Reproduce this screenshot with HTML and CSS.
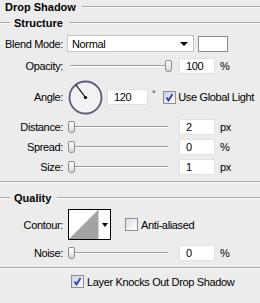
FILE: index.html
```html
<!DOCTYPE html>
<html lang="en">
<head>
	<meta charset="UTF-8">
	<title>Drop Shadow</title>
	<link rel="stylesheet" href="styles.css">
</head>
<body>
	<div class="panel">
		<div class="title">
			<span class="title-text">Drop Shadow</span>
			<span class="rule"></span>
		</div>
		<div class="group-head">
			<span class="rule lead"></span>
			<span class="group-text">Structure</span>
			<span class="rule"></span>
		</div>

		<div class="row blend-row">
			<span class="label">Blend Mode:</span>
			<div class="select">
				<span>Normal</span>
				<span class="arrow"></span>
			</div>
			<span class="swatch"></span>
		</div>

		<div class="row opacity-row">
			<span class="label">Opacity:</span>
			<div class="slider">
				<span class="track"></span>
				<span class="thumb"></span>
			</div>
			<span class="field">100</span>
			<span class="unit">%</span>
		</div>

		<div class="row angle-row">
			<span class="label">Angle:</span>
			<div class="dial">
				<svg width="35" height="35" viewBox="0 0 35 35">
					<circle cx="17.5" cy="17.5" r="16" fill="#f2f2f4" stroke="#5c5c78" stroke-width="1.8"/>
					<line x1="17.5" y1="17.5" x2="8" y2="5" stroke="#000" stroke-width="1.2"/>
					<circle cx="17.5" cy="17.5" r="1.6" fill="#000"/>
				</svg>
			</div>
			<span class="field angle-field">120</span>
			<span class="degree">°</span>
			<span class="check checked">
				<svg width="9" height="9" viewBox="0 0 9 9"><path d="M1.5 4.5 L3.5 7.5 L7.5 1" fill="none" stroke="#2f3fa3" stroke-width="1.8"/></svg>
			</span>
			<span class="check-label">Use Global Light</span>
		</div>

		<div class="row slider-row">
			<span class="label">Distance:</span>
			<div class="slider low">
				<span class="thumb"></span>
				<span class="track"></span>
			</div>
			<span class="field">2</span>
			<span class="unit">px</span>
		</div>
		<div class="row slider-row">
			<span class="label">Spread:</span>
			<div class="slider low">
				<span class="thumb"></span>
				<span class="track"></span>
			</div>
			<span class="field">0</span>
			<span class="unit">%</span>
		</div>
		<div class="row slider-row">
			<span class="label">Size:</span>
			<div class="slider low">
				<span class="thumb"></span>
				<span class="track"></span>
			</div>
			<span class="field">1</span>
			<span class="unit">px</span>
		</div>

		<div class="separator"></div>

		<div class="group-head quality-head">
			<span class="rule lead"></span>
			<span class="group-text">Quality</span>
			<span class="rule"></span>
		</div>

		<div class="row contour-row">
			<span class="label">Contour:</span>
			<div class="contour">
				<svg width="29" height="29" viewBox="0 0 29 29">
					<rect width="29" height="29" fill="#fff"/>
					<polygon points="0,29 29,0 29,29" fill="#a3a3a3"/>
				</svg>
				<span class="contour-arrow"><span class="arrow"></span></span>
			</div>
			<span class="check"></span>
			<span class="check-label">Anti-aliased</span>
		</div>

		<div class="row slider-row noise-row">
			<span class="label">Noise:</span>
			<div class="slider low">
				<span class="thumb"></span>
				<span class="track"></span>
			</div>
			<span class="field">0</span>
			<span class="unit">%</span>
		</div>

		<div class="separator"></div>

		<div class="knock-row">
			<span class="check checked">
				<svg width="9" height="9" viewBox="0 0 9 9"><path d="M1.5 4.5 L3.5 7.5 L7.5 1" fill="none" stroke="#2f3fa3" stroke-width="1.8"/></svg>
			</span>
			<span class="check-label">Layer Knocks Out Drop Shadow</span>
		</div>
	</div>
</body>
</html>
```

FILE: styles.css
```css
body {
	margin: 0;
	background-color: #ececec;
	font-family: 'Liberation Sans', Arial, sans-serif;
	font-size: 11px;
	letter-spacing: -0.35px;
	color: #000;
}
.panel {
	width: 260px;
	height: 303px;
	overflow: hidden;
}
.rule {
	flex: 1;
	height: 0;
	border-top: 1px solid #a8a8a8;
	border-bottom: 1px solid #fafafa;
}
.rule.lead {
	flex: none;
	width: 10px;
}
.title {
	display: flex;
	align-items: center;
	height: 13px;
	padding-left: 5px;
}
.title-text {
	font-weight: bold;
	letter-spacing: 0;
	margin-right: 6px;
}
.group-head {
	display: flex;
	align-items: center;
	height: 13px;
	margin-top: 3px;
}
.group-text {
	font-weight: bold;
	letter-spacing: 0;
	margin: 0 6px 0 4px;
}
.row {
	display: flex;
	align-items: center;
	white-space: nowrap;
}
.label {
	width: 63px;
	text-align: right;
	margin-right: 5px;
}
.blend-row {
	height: 19px;
	margin-top: 5px;
}
.select {
	width: 127px;
	height: 17px;
	display: flex;
	align-items: center;
	justify-content: space-between;
	background-color: #fff;
	border: 1px solid #c4c4c4;
	padding-left: 4px;
	padding-right: 5px;
	box-sizing: border-box;
	margin-left: -1px;
}
.arrow {
	width: 0;
	height: 0;
	border-left: 4px solid transparent;
	border-right: 4px solid transparent;
	border-top: 4px solid #000;
}
.swatch {
	width: 30px;
	height: 16px;
	margin-left: 4px;
	background-color: #fff;
	border: 1px solid #8c8c8c;
	box-sizing: border-box;
}
.opacity-row {
	height: 17px;
	margin-top: 4px;
}
.slider {
	width: 104px;
	height: 14px;
	display: flex;
	align-items: center;
}
.slider .track {
	flex: 1;
	height: 0;
	border-top: 1px solid #9c9c9c;
	border-bottom: 1px solid #fff;
}
.slider .thumb {
	width: 5px;
	height: 10px;
	border: 1px solid #8a8a8a;
	border-radius: 2px 2px 3px 3px;
	background: linear-gradient(#ffffff, #d8d8d8);
}
.opacity-row .slider .track {
	margin-left: 2px;
}
.slider.low .track {
	margin-right: 4px;
}
.field {
	width: 36px;
	height: 16px;
	margin-left: 7px;
	padding-left: 6px;
	box-sizing: border-box;
	background-color: #fff;
	border: 1px solid #e2e2e2;
	line-height: 14px;
}
.unit {
	margin-left: 5px;
}
.angle-row {
	height: 36px;
	margin-top: 5px;
}
.dial {
	width: 35px;
	height: 35px;
}
.dial svg {
	display: block;
}
.angle-field {
	width: 41px;
	margin-left: 4px;
}
.degree {
	margin-left: 4px;
	font-size: 9px;
	position: relative;
	top: -3px;
}
.check {
	width: 11px;
	height: 11px;
	flex: none;
	border: 1px solid #8e8e8e;
	background: linear-gradient(135deg, #dcdcdc, #ffffff);
	display: flex;
	align-items: center;
	justify-content: center;
}
.check.checked {
	background: linear-gradient(135deg, #c9cfe6, #ffffff);
}
.angle-row .check {
	margin-left: 8px;
}
.check-label {
	margin-left: 3px;
	white-space: nowrap;
}
.angle-row .check-label {
	margin-left: 2px;
}
.slider-row {
	height: 16px;
	margin-top: 4px;
}
.separator {
	height: 0;
	margin-top: 6px;
	border-top: 1px solid #a8a8a8;
	border-bottom: 1px solid #fafafa;
}
.quality-head {
	margin-top: 8px;
}
.contour-row {
	height: 31px;
	margin-top: 5px;
}
.contour {
	display: flex;
	border: 1px solid #000;
	background-color: #fff;
}
.contour svg {
	display: block;
}
.contour-arrow {
	width: 11px;
	display: flex;
	align-items: center;
	justify-content: center;
	border-left: 1px solid #d0d0d0;
}
.contour-arrow .arrow {
	border-left-width: 3px;
	border-right-width: 3px;
	border-top-width: 4px;
}
.contour-row .check {
	margin-left: 14px;
}
.noise-row {
	margin-top: 5px;
}
.knock-row {
	display: flex;
	align-items: center;
	height: 13px;
	margin-top: 6px;
	padding-left: 71px;
}
```
